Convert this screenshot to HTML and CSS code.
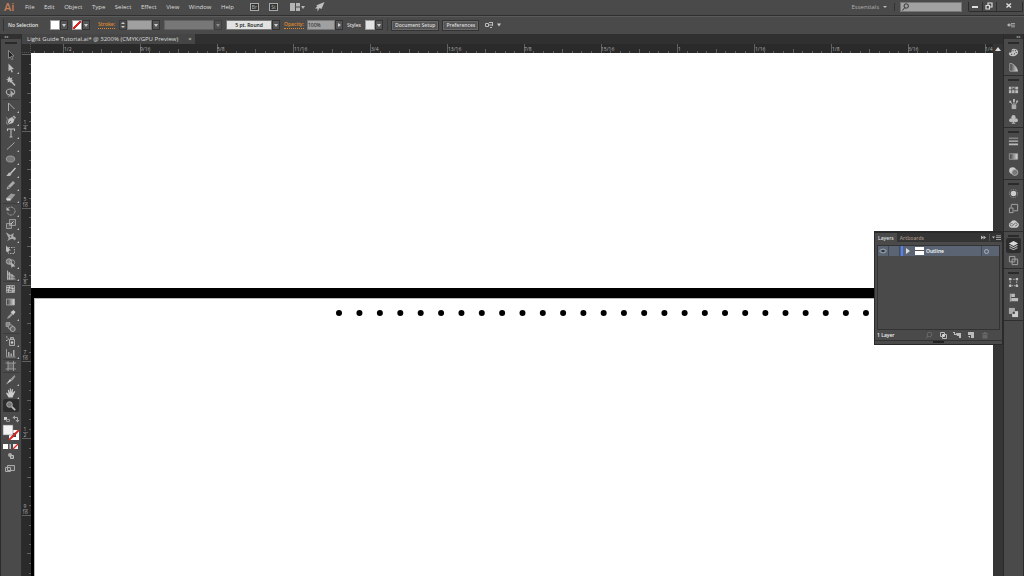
FILE: index.html
```html
<!DOCTYPE html>
<html lang="en">
<head>
<meta charset="utf-8">
<title>Light Guide Tutorial.ai</title>
<link rel="stylesheet" href="styles.css">
</head>
<body>
<header class="menubar">
  <span class="logo">Ai</span>
  <nav class="menus">
    <button>File</button><button>Edit</button><button>Object</button><button>Type</button><button>Select</button><button>Effect</button><button>View</button><button>Window</button><button>Help</button>
  </nav>
  <div class="apps">
    <button class="app">Br</button><button class="app">St</button>
    <button class="arrange" aria-label="Arrange documents"><svg width="15" height="9" viewBox="0 0 15 9"><path fill="#b4b4b4" d="M0 0h5v8H0zM6 0h4v3.500H6zM6 4.500h4V8H6zM11 3h4l-2 3z"/></svg></button>
    <button aria-label="GPU performance"><svg width="10" height="10" viewBox="0 0 10 10"><path fill="#c0c0c0" d="M9.500 0 6.500 7 4.500 6 2.500 9.500 2.500 6.500 0 6.500 2.500 4 1 3.500z"/></svg></button>
  </div>
  <div class="menubar-right">
    <button class="workspace-switch">Essentials <span class="caret"></span></button>
    <label class="search"><svg width="7" height="8" viewBox="0 0 7 8"><circle cx="4.200" cy="3" r="2.200" fill="none" stroke="#333"/><path d="M2.700 4.700.5 7.500" stroke="#333"/></svg><input type="text" aria-label="Search"></label>
    <div class="window-buttons">
      <button aria-label="Minimize"><svg width="8" height="8" viewBox="0 0 8 8"><path fill="#ddd" d="M1 4h6v2H1z"/></svg></button>
      <button aria-label="Restore"><svg width="8" height="8" viewBox="0 0 8 8"><path fill="none" stroke="#ddd" stroke-width="1.200" d="M3 3V1h4v4H5M1 3.500h3.500V7H1z"/></svg></button>
      <button class="wide" aria-label="Close"><svg width="8" height="8" viewBox="0 0 8 8"><path stroke="#ddd" stroke-width="1.500" d="m1.500 1.500 4.500 4M6 1.500l-4.500 4"/></svg></button>
    </div>
  </div>
</header>

<section class="controlbar">
  <span class="grip"></span>
  <span class="selection">No Selection</span>
  <button class="swatch" aria-label="Fill"><i class="chip"></i><i class="drop"></i></button>
  <button class="swatch" aria-label="Stroke color"><i class="chip none"></i><i class="drop"></i></button>
  <label class="link stroke-label" for="weight">Stroke:</label>
  <span class="stepper"><i class="up"></i><i class="down"></i></span>
  <span class="field"><input id="weight" class="w26" type="text"><i class="drop"></i></span>
  <span class="field dim"><input class="w50" type="text" aria-label="Width profile"><i class="drop"></i></span>
  <span class="field light"><input class="w46" type="text" value="5 pt. Round" aria-label="Brush"><i class="drop"></i></span>
  <label class="link" for="opacity">Opacity:</label>
  <span class="field"><input id="opacity" class="w27" type="text" value="100%"><i class="drop side"></i></span>
  <span class="styles-label">Styles</span>
  <button class="swatch" aria-label="Graphic style"><i class="chip pale"></i><i class="drop"></i></button>
  <span class="divider"></span>
  <button class="push">Document Setup</button>
  <button class="push">Preferences</button>
  <button class="similar" aria-label="Select similar"><svg width="16" height="8" viewBox="0 0 16 8"><path fill="none" stroke="#bbb" d="M.5 2.500h3v3h-3zM4 1.500h3M4 4h3M5 6.500h2M7.500 1v4"/><path fill="#ccc" d="M12 2.500h4l-2 3z"/></svg></button>
  <button class="barmenu" aria-label="Panel menu"><svg width="8" height="6" viewBox="0 0 8 6"><path fill="#bbb" d="M0 3l2.500-2v4zM2 2.500h3v1H2zM4 1h4v.8H4zM4 2.700h4v.8H4zM4 4.400h4v.8H4z"/></svg></button>
</section>

<main class="workspace">
  <aside class="tools">
    <div class="collapse">◂◂</div>
    <div class="toolgrip"><i></i></div>
    <div class="toollist">
      <button aria-label="Selection"><svg viewBox="0 0 12 12"><path d="M3.500 1.500 9 7 6.500 7.200 8 10 6.500 10.500 5.400 7.800 3.500 9.300z" fill="#222" stroke="#999" stroke-width=".8"/></svg></button>
      <button class="more" aria-label="Direct selection"><svg viewBox="0 0 12 12"><path d="M3.500 1.500 9 7 6.500 7.200 8 10 6.500 10.500 5.400 7.800 3.500 9.300z" fill="#bbb"/></svg></button>
      <button aria-label="Magic wand"><svg viewBox="0 0 12 12"><path d="m5 5 5 5.500" stroke="#bbb" stroke-width="1.500"/><path fill="#bbb" d="m4.500 1 .8 2.200L7.500 2.500 6.500 4.500 8.500 5.500 6.300 6 5.800 8 4.500 6.500 2.500 7.500 3 5.500 1 4.500 3.200 4 2.500 2 4 2.800z"/></svg></button>
      <button class="end" aria-label="Lasso"><svg viewBox="0 0 12 12"><ellipse cx="5.500" cy="5" rx="4.200" ry="3" fill="none" stroke="#aaa" stroke-width="1.200"/><path d="M2.500 8c1.500-1 3 0 1 2" fill="none" stroke="#aaa"/><path d="m5.500 3 4 4.500-2 .2-.5 2.300-1.500-.5z" fill="#aaa"/></svg></button>
      <button class="more" aria-label="Anchor point"><svg viewBox="0 0 12 12"><path d="M3.500 10V2l6 6" fill="none" stroke="#aaa"/></svg></button>
      <button class="more" aria-label="Pen"><svg viewBox="0 0 12 12"><path d="M1 3.500c1.500-.5 1.500 1.500 1 3s-1 3 .5 4" fill="none" stroke="#999" stroke-width=".8"/><path d="M2.500 10.500 3.500 5 7 3 9.500 5.500 8 9z" fill="#c0c0c0"/><path d="m7.500 2.500 1.500-1 2 2-1 1.500z" fill="#aaa"/><path d="m3 10 3-3" stroke="#444" stroke-width=".7"/></svg></button>
      <button class="more" aria-label="Type"><svg viewBox="0 0 12 12"><path d="M2.500 4V2h7v2M6 2v8M4.500 10h3" fill="none" stroke="#bbb" stroke-width="1.100"/></svg></button>
      <button class="more" aria-label="Line"><svg viewBox="0 0 12 12"><path d="m2 9.500 7.500-7" stroke="#aaa"/></svg></button>
      <button class="more" aria-label="Ellipse"><svg viewBox="0 0 12 12"><ellipse cx="5.500" cy="6" rx="4.200" ry="3" fill="#777" stroke="#aaa" stroke-width=".8"/></svg></button>
      <button class="more" aria-label="Paintbrush"><svg viewBox="0 0 12 12"><path d="M10.500 2 5.500 7.500" stroke="#ccc" stroke-width="1.300"/><path d="M1 9.500c2 0 1.500-2.500 3.500-3L6.500 8C5.500 10.500 3 10.500 1 9.500z" fill="#bbb"/></svg></button>
      <button class="more" aria-label="Pencil"><svg viewBox="0 0 12 12"><path d="m1.500 10.500 1-3L8 2l2 2-5.500 5.500z" fill="#aaa"/><path d="m3 7.500 1.500 1.500" stroke="#444"/></svg></button>
      <button class="more end" aria-label="Eraser"><svg viewBox="0 0 12 12"><path d="m1 7.500 5-5 4.500 1-5 6H2z" fill="#999"/><path d="m1 7.500 4.500 0L5.500 9.500H2z" fill="#ddd"/></svg></button>
      <button class="more" aria-label="Rotate"><svg viewBox="0 0 12 12"><path d="M3 3.500a4 4 0 1 1-.7 4" fill="none" stroke="#aaa" stroke-dasharray="2 1"/><path d="M1.500 2v3.500H5z" fill="#bbb"/></svg></button>
      <button class="more" aria-label="Scale"><svg viewBox="0 0 12 12"><path d="M1.500 5.500h5v5h-5zM4.500 1.500h6v6h-6z" fill="#666" fill-opacity=".6" stroke="#aaa" stroke-width=".8"/><path d="m5.500 6.500 3-3" stroke="#ccc"/></svg></button>
      <button class="more" aria-label="Width"><svg viewBox="0 0 12 12"><path d="M1 1.500c2 0 2.500 2.500 4.500 2.500L9 2 8 5l3 2-1 2.500C7 7 5 8 2 10.500 3 8.500 4 7.500 3.500 6.500S2 4 1 1.500z" fill="#aaa"/><circle cx="5.500" cy="5.800" r=".8" fill="#444"/></svg></button>
      <button aria-label="Free transform"><svg viewBox="0 0 12 12"><path d="M3.500 3.500h6v6h-6z" fill="none" stroke="#aaa" stroke-dasharray="1.500 1"/><path d="m1 1.500 5 5H4L2.500 8.500 1 7z" fill="#bbb"/></svg></button>
      <button class="more" aria-label="Shape builder"><svg viewBox="0 0 12 12"><circle cx="4" cy="4.500" r="2.700" fill="#777" stroke="#bbb" stroke-width=".8"/><circle cx="7" cy="5.500" r="2.700" fill="none" stroke="#aaa" stroke-width=".8"/><path d="m6 5 4.500 4.500H8L6.500 11z" fill="#bbb"/></svg></button>
      <button class="more end" aria-label="Perspective grid"><svg viewBox="0 0 12 12"><path d="M2 1.500 9.500 7v3.500H2z" fill="#777"/><path d="M2.500 1.500v9M4.500 3v7.500M7 5v5.500M2 4.500l7.500 3M2 10h8.500" stroke="#bbb" stroke-width=".8"/></svg></button>
      <button aria-label="Mesh"><svg viewBox="0 0 12 12"><path d="M1.500 2.500h8v7h-8z" fill="#666" stroke="#aaa" stroke-width=".8"/><path d="M4 2.500c2 2-2 4 0 7M7.500 2.500c-2 2 2 4 0 7M1.500 5c3-2 5 2 8 0M1.500 7.500c3-2 5 2 8 0" fill="none" stroke="#ddd" stroke-width=".8"/></svg></button>
      <button aria-label="Gradient"><svg viewBox="0 0 12 12"><path d="M1.500 3h8v6h-8z" fill="url(#ramp)" stroke="#aaa" stroke-width=".8"/></svg></button>
      <button class="more" aria-label="Eyedropper"><svg viewBox="0 0 12 12"><path d="m2 10 1-2.500 3.500-3.500L8 5.500 4.500 9z" fill="#999"/><path d="m5.500 3 1-.5 2-1.500 2 2L9 5l-.5 1z" fill="#ccc"/></svg></button>
      <button class="end" aria-label="Blend"><svg viewBox="0 0 12 12"><path d="M1 1.500h4v4H1z" fill="#888" stroke="#aaa" stroke-width=".7"/><circle cx="5.500" cy="6" r="2.300" fill="#555" stroke="#aaa" stroke-width=".8"/><circle cx="7.700" cy="8" r="2.500" fill="#666" stroke="#bbb" stroke-width=".8"/></svg></button>
      <button class="more" aria-label="Symbol sprayer"><svg viewBox="0 0 12 12"><path d="M4.500 4.500h5v6h-5zM5.500 2.500h3v1.500h-3z" fill="#555" stroke="#aaa"/><circle cx="7" cy="7.500" r="1.200" fill="#ccc"/><path d="M1 2h1.500M2.500 4H4M1 5.500h1.500" stroke="#bbb"/></svg></button>
      <button class="more end" aria-label="Column graph"><svg viewBox="0 0 12 12"><path d="M1.500 2v8h9" fill="none" stroke="#aaa" stroke-width=".8"/><path d="M3 5h1.500v4.500H3zM5.500 6.500H7v3H5.500zM8 3h1.500v6.500H8z" fill="#aaa"/></svg></button>
      <button class="end" aria-label="Artboard"><svg viewBox="0 0 12 12"><path d="M3 3h5.500v6H3z" fill="#666"/><path d="M3 1v10M8.500 1v10M.5 3h10.500M.5 9h10.500" stroke="#aaa" stroke-width=".8"/></svg></button>
      <button class="more" aria-label="Slice"><svg viewBox="0 0 12 12"><path d="M1 10.500 5 5l2 1.500z" fill="#ccc"/><path d="m5.500 5 4-4 .8 1.500L7.500 6.500z" fill="#999"/></svg></button>
      <button class="more" aria-label="Hand"><svg viewBox="0 0 12 12"><path d="M3.500 10.500 1 6l1-.5 1.500 1.500L2.800 3l1-.3 1 2.800V1.500h1.100v4L7 2l1 .2-.4 3.800L9.500 4l.8.6-2 4-.8 2z" fill="#ccc"/></svg></button>
      <button class="active" aria-label="Zoom"><svg viewBox="0 0 12 12"><circle cx="4.500" cy="4.500" r="2.800" fill="#777" stroke="#aaa"/><path d="m6.700 6.700 3.500 3.500" stroke="#bbb" stroke-width="1.800"/></svg></button>
    </div>
    <svg class="paint" width="18" height="64" viewBox="0 0 18 64" role="img" aria-label="Fill and stroke">
      <path fill="#ccc" d="M2 4h3v3H2z"/><path fill="none" stroke="#999" d="M4.500 6.500h3v2h-3z"/><path fill="none" stroke="#aaa" d="M12.500 4.500h3v3"/><path fill="#aaa" d="M13 2.500 10.500 4.500 13 6.500zM13.500 7h4l-2 2.500z"/>
      <path fill="#fff" d="M7 17h10v10H7z"/><path stroke="#d22" stroke-width="1.800" d="m7 27 10-10"/><path fill="#444" d="M10 20h4v4h-4z"/><path stroke="#d22" stroke-width="1.800" d="m10 24 4-4"/>
      <path fill="#f4f4f4" stroke="#777" stroke-width=".6" d="M1 12h10v10H1z"/>
      <path fill="#fff" d="M1 31h5v5H1z"/><path fill="url(#ramp)" d="M6 31h3v5H6z"/><path fill="#eee" d="M11 31h5v5h-5z"/><path stroke="#d22" stroke-width="1.300" d="m11 36 5-5"/>
      <circle cx="8" cy="42" r="2" fill="#aaa"/><path fill="#777" stroke="#bbb" d="M8.500 42.500h3v3h-3z"/>
      <path fill="#555" stroke="#aaa" d="M5.500 52.500h7v5h-7zM3.500 54.500h5v4h-5z"/>
    </svg>
  </aside>

  <section class="document">
    <div class="tabs"><div class="tab"><span>Light Guide Tutorial.ai* @ 3200% (CMYK/GPU Preview)</span><button aria-label="Close document">×</button></div></div>
    <div class="rulers">
      <div class="corner"></div>
      <svg class="hruler" id="hruler" role="img" aria-label="Horizontal ruler"></svg>
      <svg class="vruler" id="vruler" role="img" aria-label="Vertical ruler"></svg>
      <svg class="canvas" role="img" aria-label="Artwork">
        <path fill="#bbb" d="M2 235h2000v11H4v2000H2z"/>
        <path fill="#000" d="M0 235h2000v10H3v2000H0z"/>
        <g id="dots"></g>
      </svg>
    </div>
    <div class="scrollbar"><i></i></div>
  </section>

  <aside class="dock">
    <div class="collapse">◂◂</div>
    <div class="group">
      <button aria-label="Color"><svg viewBox="0 0 12 12"><path d="M6 2c3 0 5 1.500 5 3.500S9 10 5.500 10 1 8.500 1 7s1.500-.8 2.500-1S3 2 6 2z" fill="#c4c4c4"/><path d="M5 4h1M7.500 4h1M8.500 6h1M6.500 7.500h1M3.500 8h1" stroke="#444" stroke-width="1.200"/></svg></button>
      <button aria-label="Color guide"><svg viewBox="0 0 12 12"><path d="M2 1.500c4 0 7.500 3.500 8.500 8.500H2z" fill="url(#ramp)" stroke="#bbb" stroke-width=".8"/></svg></button>
    </div>
    <div class="group">
      <button aria-label="Swatches"><svg viewBox="0 0 12 12"><path d="M1 3h10v7H1z" fill="#bbb"/><path d="M1 6.300h10M4 3v7M7.500 3v7" stroke="#444" stroke-width=".8"/><path fill="#555" d="M5 4h2v2H5z"/></svg></button>
      <button aria-label="Brushes"><svg viewBox="0 0 12 12"><path d="M4 6h5v5H4z" fill="#aaa"/><path d="M5 6 2.500 3M6.500 6V2M8 6l2-3" stroke="#bbb"/><path d="M1.500 2h2v2h-2zM5.500 0h2v3h-2zM9 1.500h2v2H9z" fill="#bbb"/></svg></button>
      <button aria-label="Symbols"><svg viewBox="0 0 12 12"><circle cx="6" cy="3.500" r="2.300" fill="#bbb"/><circle cx="3.500" cy="6.800" r="2.300" fill="#bbb"/><circle cx="8.500" cy="6.800" r="2.300" fill="#bbb"/><path d="M5.500 5h1l.5 4.500 1.500 1h-5l1.500-1z" fill="#bbb"/></svg></button>
    </div>
    <div class="group">
      <button aria-label="Stroke"><svg viewBox="0 0 12 12"><path d="M1 2h10v.8H1zM1 5h10v1.200H1zM1 8.300h10V10H1z" fill="#bbb"/></svg></button>
      <button aria-label="Gradient panel"><svg viewBox="0 0 12 12"><path d="M1.500 3h9v6h-9z" fill="url(#ramp)" stroke="#aaa" stroke-width=".8"/></svg></button>
      <button aria-label="Transparency"><svg viewBox="0 0 12 12"><circle cx="5" cy="5" r="3.700" fill="#ccc"/><circle cx="7.500" cy="7" r="3.300" fill="#777" stroke="#bbb" stroke-width=".8"/></svg></button>
    </div>
    <div class="group">
      <button aria-label="Appearance"><svg viewBox="0 0 12 12"><circle cx="6" cy="6" r="3" fill="#ccc"/><circle cx="6" cy="6" r="4.500" fill="none" stroke="#999" stroke-dasharray="1 1"/></svg></button>
      <button aria-label="Graphic styles"><svg viewBox="0 0 12 12"><path d="M3.500 1.500h7v7h-4M1.500 5.500h4v5h-4zM3.500 2v3" fill="none" stroke="#aaa"/></svg></button>
      <button aria-label="Libraries"><svg viewBox="0 0 12 12"><path d="M3.500 10.500a3 3 0 0 1-.5-5.800A3.900 3.900 0 0 1 10 4.700a3 3 0 0 1-1 5.800z" fill="#ccc"/><path d="M6 7.500C4 5 2 6 2.300 7.500S5 9 6 7.500s2-3 3.500-1.500S9 9 7.500 8.500" fill="none" stroke="#555" stroke-width=".8"/></svg></button>
    </div>
    <div class="group">
      <button class="active" aria-label="Layers"><svg viewBox="0 0 12 12"><path d="m6 1 5 2.700-5 2.800-5-2.800z" fill="#d8d8d8"/><path d="m1 6.200 1.300-.7L6 7.600l3.700-2.100 1.300.7L6 9z" fill="#bbb"/><path d="m1 8.600 1.300-.6L6 10l3.700-2 1.300.6-5 2.700z" fill="#aaa"/></svg></button>
      <button aria-label="Artboards"><svg viewBox="0 0 12 12"><path d="M1.500 1.500h6v6h-6zM4.500 4.500h6v6h-6z" fill="#4a4a4a" stroke="#aaa"/></svg></button>
    </div>
    <div class="group">
      <button aria-label="Transform"><svg viewBox="0 0 12 12"><path d="M2.500 2.500h7v7h-7z" fill="none" stroke="#aaa" stroke-dasharray="2 1"/><path d="M1 1h2.500v2.500H1zM8.500 1H11v2.500H8.500zM1 8.500h2.500V11H1zM8.500 8.500H11V11H8.500z" fill="#bbb"/></svg></button>
      <button aria-label="Align"><svg viewBox="0 0 12 12"><path d="M2 1.500h1v9H2zM3.500 2h4v3.500h-4zM3.500 6.500H11V10H3.500z" fill="#bbb"/></svg></button>
      <button aria-label="Pathfinder"><svg viewBox="0 0 12 12"><path d="M1 1h6.500v6.500H1z" fill="#aaa"/><path d="M4.500 4.500H11V11H4.500z" fill="#ccc"/><path d="M5 5h2.500v2.500H5z" fill="#444"/></svg></button>
    </div>
  </aside>
</main>

<section class="panel">
  <div class="panel-tabs">
    <button class="panel-tab on">Layers</button><button class="panel-tab">Artboards</button>
    <svg class="panel-menu" width="22" height="7" viewBox="0 0 22 7"><path fill="#bbb" d="m1 1.500 2.500 2L1 5.500zM3.500 1.500l2.500 2-2.500 2zM12 2.500h3l-1.500 2zM16 1.500h5v.7h-5zM16 3.200h5V4h-5zM16 5h5v.7h-5z"/><path fill="#555" d="M9 0h1v7H9z"/></svg>
  </div>
  <div class="layers">
    <div class="layer">
      <span class="cell eye"><svg width="8" height="6" viewBox="0 0 8 6"><path d="M.5 3C2 .5 6 .5 7.500 3 6 5.500 2 5.500.5 3z" fill="none" stroke="#9aa2ae"/><circle cx="4" cy="3" r="1" fill="#222"/></svg></span>
      <span class="cell lock"></span>
      <span class="color"></span>
      <span class="expand"></span>
      <span class="thumb"></span>
      <span class="name">Outline</span>
      <span class="target"><i></i></span>
    </div>
  </div>
  <div class="panel-foot">
    <span>1 Layer</span>
    <div class="foot-icons">
      <button aria-label="Locate object"><svg viewBox="0 0 8 8"><circle cx="4.500" cy="3.500" r="2.300" fill="none" stroke="#6a6a6a"/><path d="M3 5 1 7.500" stroke="#6a6a6a"/></svg></button>
      <button aria-label="Clipping mask"><svg viewBox="0 0 8 8"><path d="M1.500 1.500h4v4h-4zM3.500 3.500h4v4h-4z" fill="none" stroke="#bbb"/><circle cx="4.500" cy="4.500" r="1.300" fill="#ddd"/></svg></button>
      <button aria-label="New sublayer"><svg viewBox="0 0 8 8"><path d="M0 1h2v2h2v1H1V2H0zM3 2h5v5H6V5H4z" fill="#bbb"/></svg></button>
      <button aria-label="New layer"><svg viewBox="0 0 8 8"><path d="M1 1h6v6H4V4H1z" fill="#bbb"/><path d="M1 5h2v2z" fill="#ccc"/></svg></button>
      <button aria-label="Delete layer"><svg viewBox="0 0 8 8"><path d="M1 2h6v1H1zM3 1h2v1H3zM1.500 3.500h5v4h-5z" fill="#666"/></svg></button>
    </div>
  </div>
  <div class="panel-grip"><i></i></div>
</section>

<svg class="defs" width="0" height="0" aria-hidden="true"><defs><linearGradient id="ramp"><stop offset="0" stop-color="#3a3a3a"/><stop offset="1" stop-color="#ddd"/></linearGradient></defs></svg>
<script src="rulers.js"></script>
</body>
</html>
```
FILE: styles.css
```css
* { box-sizing: border-box; }
html, body { height: 100%; }
body {
  margin: 0;
  display: flex;
  flex-direction: column;
  overflow: hidden;
  background: #4a4a4a;
  color: #dcdcdc;
  font-family: "Open Sans", "Noto Sans", sans-serif;
  font-size: 6px;
  line-height: 8px;
}
button, input {
  margin: 0;
  padding: 0;
  border: 0;
  background: none;
  color: inherit;
  font: inherit;
}
svg { display: block; }
i { display: block; }
.defs { position: absolute; }

.menubar {
  flex: none;
  display: flex;
  align-items: center;
  height: 16px;
  padding-bottom: 1px;
  border-bottom: 1px solid #303030;
}
.logo {
  width: 25px;
  padding-left: 4px;
  color: #c58058;
  font-size: 11px;
  font-weight: 600;
  line-height: 14px;
}
.menus { display: flex; justify-content: space-between; width: 209px; }
.apps {
  display: flex;
  align-items: center;
  gap: 10px;
  margin-left: 16px;
}
.app {
  width: 9px;
  height: 8px;
  border: 1px solid #aaa;
  background: #333;
  font-size: 5px;
  line-height: 5px;
  color: #bbb;
}
.arrange { margin-left: 2px; }
.menubar-right {
  display: flex;
  align-items: center;
  margin-left: auto;
}
.workspace-switch {
  display: flex;
  align-items: center;
  gap: 4px;
  padding-right: 7px;
  border-right: 1px solid #333;
  color: #b0b0b0;
}
.caret { border: 2px solid transparent; border-top-color: #bbb; border-bottom: 0; }
.search {
  display: flex;
  align-items: center;
  width: 62px;
  height: 10px;
  margin: 0 6px 0 5px;
  padding-left: 1px;
  border: 1px solid #777;
  background: #a2a2a2;
}
.search input { width: 50px; }
.window-buttons {
  display: flex;
  align-self: flex-start;
  width: 55px;
  height: 10px;
  margin-right: 1px;
  border: 1px solid #2c2c2c;
  border-top: 0;
  border-radius: 0 0 2px 2px;
}
.window-buttons button {
  flex: 1;
  display: flex;
  justify-content: center;
  border-right: 1px solid #303030;
}
.window-buttons .wide { flex: 2; border: 0; }

.controlbar {
  flex: none;
  display: flex;
  align-items: center;
  height: 18px;
  padding: 0 0 1px 3px;
  border-top: 1px solid #5a5a5a;
  font-size: 5px;
}
.grip { width: 1px; height: 12px; margin-right: 4px; background: #333; }
.selection { width: 42px; color: #e4e4e4; font-weight: 600; }
.swatch { display: flex; height: 10px; margin-right: 4px; }
.chip { width: 10px; height: 10px; border: 1px solid #999; background: #fff; }
.chip.none { background: linear-gradient(135deg, #fff 43%, #d22 43%, #d22 57%, #fff 57%); }
.chip.pale { background: #e2e2e2; }
.drop {
  width: 8px;
  height: 10px;
  border: 1px solid #333;
  background: #555;
}
.drop::after {
  content: "";
  display: block;
  margin: 3px 1px;
  border: 2px solid transparent;
  border-top: 3px solid #ccc;
  border-bottom: 0;
}
.drop.side::after {
  margin: 2px 2px;
  border: 2px solid transparent;
  border-left: 3px solid #ccc;
  border-right: 0;
}
.link { color: #e08a2c; border-bottom: 1px dotted #e08a2c; line-height: 7px; font-weight: 600; }
.stroke-label { margin: 0 4px; }
.stepper { display: grid; gap: 2px; width: 8px; height: 10px; padding: 1px; border: 1px solid #3a3a3a; align-content: center; }
.up { border: 2px solid transparent; border-bottom-color: #ccc; border-top: 0; }
.down { border: 2px solid transparent; border-top-color: #ccc; border-bottom: 0; }
.field { display: flex; height: 10px; margin-right: 4px; }
.field input { height: 10px; border: 1px solid #777; background: #a0a0a0; color: #111; }
.field.dim input { background: #777; border-color: #606060; }
.field.dim .drop { opacity: .5; }
.field.light input { background: #e2e2e2; text-align: center; font-weight: 600; }
.w26 { width: 25px; }
.w27 { width: 28px; }
.w50 { width: 50px; }
.w46 { width: 46px; }
.link + .field { margin-left: 3px; }
.styles-label { margin-right: 4px; font-weight: 600; }
.divider { width: 1px; height: 12px; margin-right: 4px; background: #3c3c3c; }
.push {
  height: 9px;
  margin-right: 5px;
  padding: 0 2px;
  border: 1px solid #6a6a6a;
  outline: 1px solid #333;
  background: #555;
  line-height: 7px;
  font-weight: 600;
}
.similar { margin-left: 2px; }
.barmenu { margin-left: auto; margin-right: 9px; }

.workspace { flex: 1; display: flex; min-height: 0; background: #2e2e2e; }
.collapse {
  height: 5px;
  padding: 0 3px;
  background: #303030;
  color: #aaa;
  font-family: "DejaVu Sans", sans-serif;
  font-size: 4px;
  line-height: 5px;
}
.tools {
  flex: none;
  display: flex;
  flex-direction: column;
  width: 21px;
  border-left: 1px solid #2c2c2c;
  background: #4a4a4a;
}
.toolgrip { height: 9px; padding: 3px 4px; }
.toolgrip i { height: 2px; background: #2a2a2a; }
.toollist button {
  position: relative;
  display: flex;
  align-items: center;
  width: 17px;
  height: 13px;
  margin-left: 2px;
  padding-left: 2px;
}
.toollist svg { width: 12px; height: 12px; }
.toollist .end { border-bottom: 1px solid #3c3c3c; }
.toollist .more::after {
  content: "";
  position: absolute;
  right: 1px;
  bottom: 0;
  border: 1px solid #bbb;
  border-top-color: transparent;
  border-left-color: transparent;
}
.toollist .active { width: 16px; border-radius: 2px; background: #2d2d2d; }
.paint { margin: 1px 0 0 1px; }

.document {
  flex: 1;
  display: grid;
  grid-template: 10px 1fr / 1fr 10px;
  min-width: 0;
  padding-left: 1px;
}
.tabs { grid-column: 1 / -1; background: #303030; }
.tab {
  display: flex;
  align-items: center;
  width: max-content;
  height: 10px;
  padding: 0 3px 0 5px;
  gap: 10px;
  background: #454545;
  line-height: 10px;
}
.rulers {
  display: grid;
  grid-template: 9px 1fr / 9px 1fr;
  min-width: 0;
  min-height: 0;
}
.corner { border-right: 1px dotted #555; border-bottom: 1px dotted #555; }
.hruler, .vruler { width: 100%; height: 100%; overflow: hidden; background: #2a2a2a; }
.hruler text, .vruler text { fill: #b0b0b0; font-family: "Open Sans", sans-serif; font-size: 5px; }
.hruler path, .vruler path { stroke: #606060; }
.canvas { width: 100%; height: 100%; overflow: hidden; background: #fff; }
.scrollbar { background: #353535; }
.scrollbar i { width: 0; margin: 3px auto; border: 3px solid transparent; border-bottom: 4px solid #ddd; border-top: 0; }

.dock {
  flex: none;
  width: 21px;
  border-left: 1px solid #2a2a2a;
  border-right: 1px solid #2a2a2a;
  background: #4a4a4a;
}
.dock .collapse { text-align: right; }
.group { padding-top: 6px; border-bottom: 1px solid #2e2e2e; }
.group::before { content: ""; display: block; width: 11px; height: 2px; margin: -3px auto 1px; background: #2a2a2a; }
.group button {
  display: flex;
  align-items: center;
  justify-content: center;
  width: 15px;
  height: 15px;
  margin: 0 auto;
}
.group svg { width: 11px; height: 11px; }
.group .active { border-radius: 2px; background: #2d2d2d; }

.panel {
  position: absolute;
  top: 231px;
  right: 21px;
  width: 129px;
  border: 1px solid #2a2a2a;
  border-top-width: 2px;
  background: #4a4a4a;
  font-size: 5px;
}
.panel-tabs { display: flex; align-items: center; height: 9px; background: #343434; }
.panel-tab { height: 9px; padding: 0 3px; color: #a08f80; font-weight: 600; }
.panel-tab.on { background: #4a4a4a; color: #ddd; }
.panel-menu { margin-left: auto; }
.layers {
  height: 85px;
  margin: 3px 2px 0;
  border: 1px solid #333;
}
.layer { display: flex; align-items: center; height: 10px; background: #5a6473; }
.cell { display: flex; align-items: center; justify-content: center; height: 10px; border-right: 1px solid #434b57; }
.eye { width: 11px; }
.lock { width: 11px; }
.color { width: 2px; height: 10px; margin-left: 1px; background: #4f80ff; }
.expand { margin: 0 5px 0 3px; border: 3px solid transparent; border-left: 4px solid #ddd; border-right: 0; }
.thumb { width: 9px; height: 8px; background: linear-gradient(#fff 3px, #555 3px, #555 4px, #fff 4px); }
.name { flex: 1; padding-left: 2px; color: #fff; font-weight: 600; }
.target { display: flex; align-items: center; width: 18px; height: 10px; padding-left: 2px; border-left: 1px solid #434b57; }
.target i { width: 5px; height: 5px; border: 1px solid #aab2be; border-radius: 50%; }
.panel-foot { display: flex; align-items: center; height: 10px; padding: 0 13px 0 2px; color: #eee; font-weight: 600; }
.foot-icons { display: flex; gap: 6px; margin-left: auto; }
.foot-icons svg { width: 8px; height: 8px; }
.panel-grip { height: 4px; border-top: 1px solid #333; }
.panel-grip i { width: 11px; height: 2px; margin: 0 auto; background: #222; }
```
FILE: rulers.js
```js
const NS = "http://www.w3.org/2000/svg";
const add = (parent, tag, attrs, text) => {
  const node = document.createElementNS(NS, tag);
  for (const key in attrs) node.setAttribute(key, attrs[key]);
  if (text) node.textContent = text;
  parent.appendChild(node);
};

const STEP = 76.8;
const tickLength = (i) => (i % 8 === 0 ? 9 : i % 4 === 0 ? 4 : 2);

const h = document.getElementById("hruler");
const hLabels = ["1/2", "9/16", "5/8", "11/16", "3/4", "13/16", "7/8", "15/16", "1", "1/16", "1/8", "3/16", "1/4"];
let d = "";
for (let i = -3; i < 200; i++) {
  d += `M${Math.round(32 + i * STEP / 8) + 0.5} 9v-${tickLength(i)}`;
}
add(h, "path", { d });
hLabels.forEach((label, i) => add(h, "text", { x: Math.floor(33 + i * STEP), y: 7 }, label));

const v = document.getElementById("vruler");
const vLabels = [["1", "4"], ["5", "16"], ["3", "8"], ["7", "16"], ["1", "2"], ["9", "16"]];
d = "";
for (let i = -8; i < 150; i++) {
  d += `M9 ${Math.round(78 + i * STEP / 8) + 0.5}h-${tickLength(i)}`;
}
add(v, "path", { d });
vLabels.forEach(([top, bottom], i) => {
  const y = Math.round(78 + i * STEP);
  add(v, "text", { x: 3, y: y - 7, "text-anchor": "middle" }, top);
  add(v, "path", { d: `M1 ${y - 5.5}h5` });
  add(v, "text", { x: 3, y: y - 1, "text-anchor": "middle" }, bottom);
});

const dots = document.getElementById("dots");
for (let i = 0; i < 27; i++) {
  add(dots, "circle", { cx: 308 + i * 20.45 - i * i * 0.007, cy: 260, r: 3 });
}
```
